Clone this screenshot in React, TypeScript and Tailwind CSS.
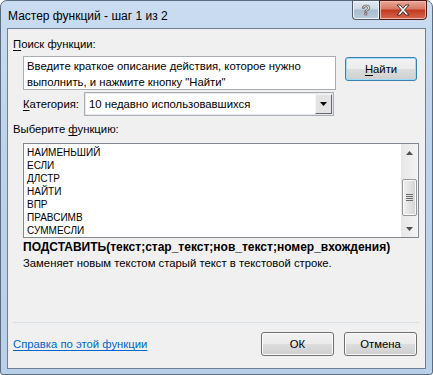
import React from 'react';

const Btn: React.FC<{ label: React.ReactNode; isDefault?: boolean; className?: string }> = ({ label, isDefault, className }) => (
  <div
    className={`flex items-center justify-center rounded-[3px] border text-[11.3px] text-black bg-[linear-gradient(#f2f2f2,#ebebeb_50%,#dddddd_50%,#cfcfcf)] ${
      isDefault
        ? 'border-[#3c7fb1] shadow-[inset_0_0_0_1px_#9fdcf8]'
        : 'border-[#707070] shadow-[inset_0_0_0_1px_#fbfbfb]'
    } ${className ?? ''}`}
  >
    {label}
  </div>
);

const FUNCS = ['НАИМЕНЬШИЙ', 'ЕСЛИ', 'ДЛСТР', 'НАЙТИ', 'ВПР', 'ПРАВСИМВ', 'СУММЕСЛИ'];

const Arrow: React.FC<{ down?: boolean }> = ({ down }) => (
  <svg width="7" height="4" viewBox="0 0 7 4">
    <path d={down ? 'M0 0h7L3.5 4z' : 'M3.5 0L7 4H0z'} fill="#505050" />
  </svg>
);

const Scrollbar = () => (
  <div className="flex h-full w-[17px] flex-col items-center bg-[linear-gradient(90deg,#e6e6e6,#f4f4f4)]">
    <div className="flex h-[17px] w-full items-center justify-center">
      <Arrow />
    </div>
    <div className="mt-[18px] flex h-[37px] w-[15px] flex-col items-center justify-center gap-[1px] rounded-[2px] border border-[#979797] bg-[linear-gradient(90deg,#f1f1f1,#e2e2e2_50%,#d4d4d4)] shadow-[inset_0_0_0_1px_#fafafa]">
      <div className="h-px w-[7px] bg-[#6b6b6b]" />
      <div className="h-px w-[7px] bg-[#6b6b6b]" />
      <div className="h-px w-[7px] bg-[#6b6b6b]" />
      <div className="h-px w-[7px] bg-[#6b6b6b]" />
    </div>
    <div className="mt-auto flex h-[17px] w-full items-center justify-center">
      <Arrow down />
    </div>
  </div>
);

export default function App() {
  return (
    <div className="h-[375px] w-[433px] overflow-hidden bg-white font-['Liberation_Sans',Arial,sans-serif]">
      <div className="flex h-[375px] w-[433px] flex-col rounded-t-[7px] rounded-b-[3px] border border-[#5d6d80] bg-[linear-gradient(#c9dcf1,#bdd3eb_40%,#b9d0ea)]">
        {/* title bar */}
        <div className="flex h-[27px] items-start">
          <div className="pl-[7px] pt-[7px] text-[12px] leading-[16px] text-black">Мастер функций - шаг 1 из 2</div>
          <div className="ml-auto mr-[5px] -mt-px flex h-[20px]">
            <div className="flex w-[27px] items-center justify-center rounded-bl-[4px] border border-r-0 border-[#525e6c] bg-[linear-gradient(#e4ebf2,#cbd8e6_45%,#a9bccf_50%,#b9cbdc)] shadow-[inset_0_0_0_1px_#edf2f7]">
              <span className="text-[14px] font-bold leading-none text-white [-webkit-text-stroke:0.6px_#2b3440]">?</span>
            </div>
            <div className="flex w-[48px] items-center justify-center rounded-br-[4px] border border-[#4c1a12] bg-[linear-gradient(#e9a99b,#d8765f_45%,#c2391f_50%,#d4684f)] shadow-[inset_0_0_0_1px_#f0b7aa]">
              <svg width="14" height="12" viewBox="0 0 14 12">
                <path
                  d="M1 1h3.2L7 4.3 9.8 1H13L8.6 6 13 11H9.8L7 7.7 4.2 11H1L5.4 6z"
                  fill="#ffffff"
                  stroke="#3a2420"
                  strokeWidth="0.9"
                  strokeLinejoin="round"
                />
              </svg>
            </div>
          </div>
        </div>

        {/* client area */}
        <div className="mx-[6px] flex h-[341px] flex-col border border-[#6f8093] bg-[#f0f0f0] text-[11.3px] leading-[16px] text-black">
          <div className="ml-[5px] mt-[7px] h-[16px]">
            <span className="underline underline-offset-2">П</span>оиск функции:
          </div>

          <div className="ml-[15px] mt-[4px] flex items-start">
            <div className="h-[34px] w-[313px] border border-[#abadb3] bg-white pl-[3px] pt-px">
              <div>Введите краткое описание действия, которое нужно</div>
              <div>выполнить, и нажмите кнопку "Найти"</div>
            </div>
            <Btn
              isDefault
              className="ml-[9px] mt-px h-[24px] w-[72px]"
              label={
                <span>
                  <span className="underline underline-offset-2">Н</span>айти
                </span>
              }
            />
          </div>

          <div className="ml-[15px] mt-[2px] flex items-center">
            <div className="w-[61px]">
              <span className="underline underline-offset-2">К</span>атегория:
            </div>
            <div className="flex h-[24px] w-[250px] items-center border border-[#abadb3] bg-white shadow-[inset_0_0_0_1px_#e3e9ef]">
              <span className="pl-[4px]">10 недавно использовавшихся</span>
              <div className="ml-auto mr-px flex h-[20px] w-[17px] items-center justify-center border border-[#f8f8f8] border-b-[#696969] border-r-[#696969] bg-[#e3e3e3]">
                <svg width="7" height="4" viewBox="0 0 7 4">
                  <path d="M0 0h7L3.5 4z" fill="#000" />
                </svg>
              </div>
            </div>
          </div>

          <div className="ml-[5px] mt-[5px] h-[16px]">
            Выберите <span className="underline underline-offset-2">ф</span>ункцию:
          </div>

          <div className="ml-[15px] mt-[6px] flex h-[95px] w-[396px] border border-[#828790] bg-white">
            <div className="flex flex-col pl-[3px] pt-[2px] text-[10px] leading-[13px]">
              {FUNCS.map(f => (
                <div key={f}>{f}</div>
              ))}
            </div>
            <div className="ml-auto h-full">
              <Scrollbar />
            </div>
          </div>

          <div className="ml-[15px] mt-px h-[16px] text-[12px] font-bold">ПОДСТАВИТЬ(текст;стар_текст;нов_текст;номер_вхождения)</div>
          <div className="ml-[15px] h-[16px]">Заменяет новым текстом старый текст в текстовой строке.</div>

          <div className="ml-[5px] mt-[51px] h-px w-[406px] bg-[#d5dfe5]" />

          <div className="mt-[9px] flex items-center">
            <span className="ml-[5px] text-[#0066cc] underline underline-offset-2">Справка по этой функции</span>
            <Btn className="ml-auto h-[24px] w-[73px]" label="ОК" />
            <Btn className="ml-[10px] mr-[8px] h-[24px] w-[73px]" label="Отмена" />
          </div>
        </div>
      </div>
    </div>
  );
}
